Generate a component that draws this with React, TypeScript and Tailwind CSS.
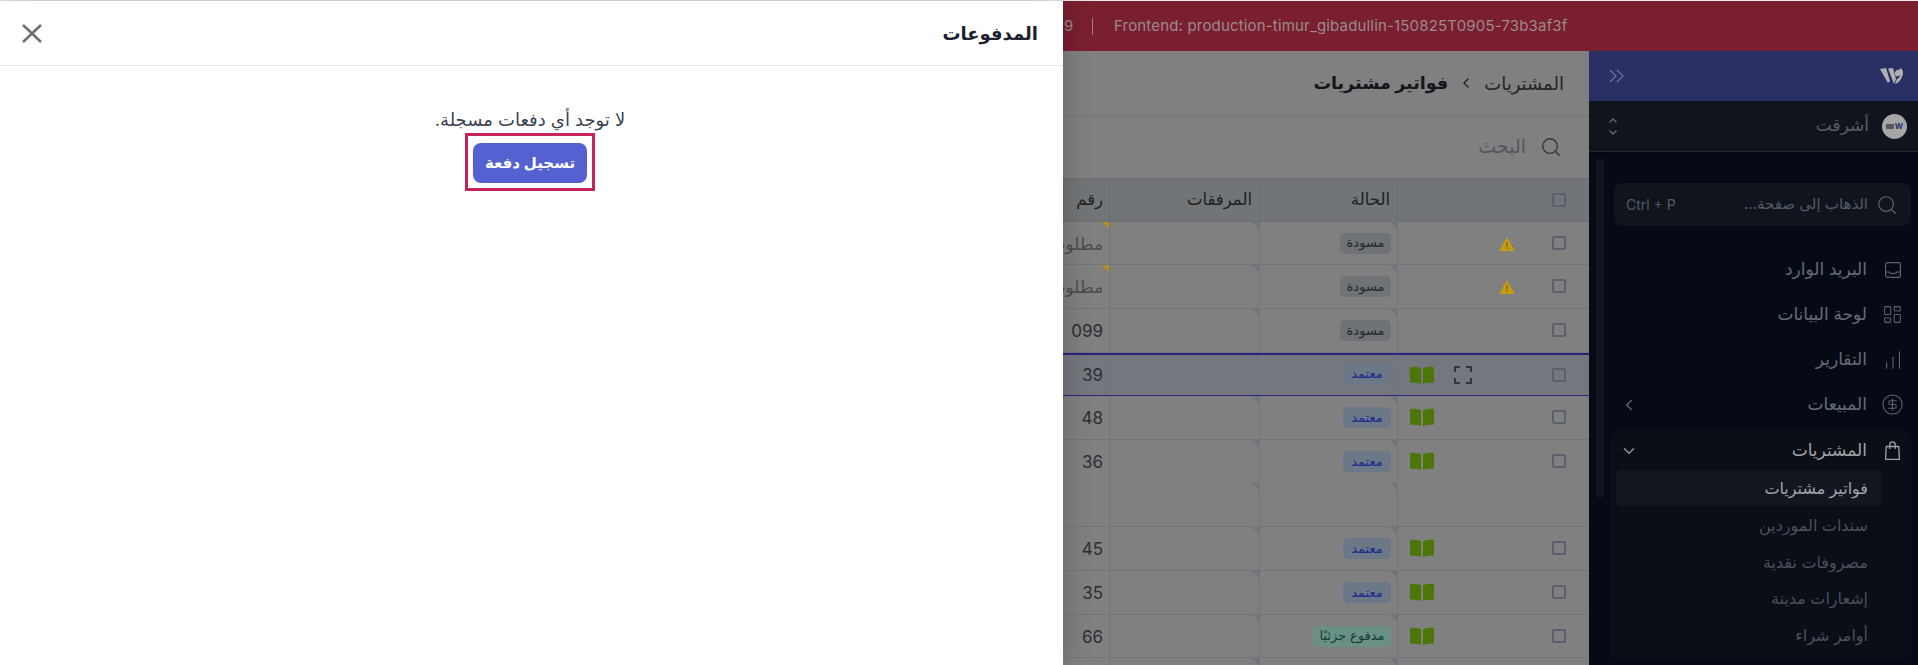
import { ChevronDown, ChevronLeft, ChartNoAxesColumnIncreasing, CircleDollarSign, LayoutDashboard, Search } from "lucide-react";
import React from "react";

const font = "font-['Inter','Noto_Sans','DejaVu_Sans',sans-serif]";

type Row = {
  num: string;
  status: "draft" | "approved" | "partial";
  warn?: boolean;
  book?: boolean;
  focus?: boolean;
  selected?: boolean;
  tall?: boolean;
  muted?: boolean;
};

const rows: Row[] = [
  { num: "مطلوب", status: "draft", warn: true, muted: true },
  { num: "مطلوب", status: "draft", warn: true, muted: true },
  { num: "099", status: "draft" },
  { num: "39", status: "approved", book: true, focus: true, selected: true },
  { num: "48", status: "approved", book: true },
  { num: "36", status: "approved", book: true, tall: true },
  { num: "45", status: "approved", book: true },
  { num: "35", status: "approved", book: true },
  { num: "66", status: "partial", book: true },
];

function Corner({ yellow, mid }: { yellow?: boolean; mid?: boolean }) {
  return (
    <span
      className={`absolute right-0 w-[7px] h-[7px] [clip-path:polygon(0_0,100%_0,100%_100%)] ${
        mid ? "top-1/2" : "top-0"
      } ${yellow ? "bg-[#b8901c]" : "bg-[#6a7580]"}`}
    />
  );
}

function StatusTag({ status }: { status: Row["status"] }) {
  if (status === "draft")
    return (
      <span className="flex items-center justify-center h-[21px] w-[51px] rounded-[5px] bg-[#6f7276] text-[#26292d] text-[13px]">
        مسودة
      </span>
    );
  if (status === "approved")
    return (
      <span className="flex items-center justify-center h-[21px] w-[48px] rounded-[5px] bg-[#6c7888] text-[#1c2a8c] text-[13px]">
        معتمد
      </span>
    );
  return (
    <span className="flex items-center justify-center h-[21px] w-[78px] rounded-[5px] bg-[#6b9186] text-[#123f36] text-[13px]">
      مدفوع جزئيًا
    </span>
  );
}

function Checkbox() {
  return <span className="block w-[14px] h-[14px] shrink-0 rounded-[2px] border-2 border-[#5a616c]" />;
}

function BookIcon() {
  return (
    <svg width="24" height="18" viewBox="0 0 24 18">
      <path d="M11 2.5C9 1 5 .5 1.500.8.6.9 0 1.600 0 2.500v13c0 .8.7 1.400 1.500 1.300 3.500-.3 7 .1 9.500 1.200z" fill="#4c7708" />
      <path d="M13 2.500c2-1.500 6-2 9.500-1.700.9.1 1.500.8 1.500 1.700v13c0 .8-.7 1.400-1.500 1.300-3.500-.3-7 .1-9.500 1.200z" fill="#4c7708" />
    </svg>
  );
}

function WarnIcon() {
  return (
    <svg width="16" height="14" viewBox="0 0 16 14">
      <path d="M8 0 16 14H0z" fill="#c39a12" />
      <rect x="7.300" y="5" width="1.400" height="4.500" fill="#85690f" />
      <rect x="7.300" y="10.500" width="1.400" height="1.500" fill="#85690f" />
    </svg>
  );
}

function FocusIcon() {
  return (
    <svg width="18" height="18" viewBox="0 0 18 18" fill="none" stroke="#32363c" strokeWidth="2">
      <path d="M1 6V1h5M12 1h5v5M17 12v5h-5M6 17H1v-5" />
    </svg>
  );
}

function InboxIcon() {
  return (
    <svg width="16" height="16" viewBox="0 0 16 16" fill="none" stroke="#5b6270" strokeWidth="1.200">
      <rect x=".6" y=".6" width="14.800" height="14.800" rx="2" />
      <path d="M.6 10h3.400c1 2.200 7 2.200 8 0h3.400" />
    </svg>
  );
}

function BagIcon() {
  return (
    <svg width="15" height="19" viewBox="0 0 15 19" fill="none" stroke="#a0a4aa" strokeWidth="1.300">
      <path d="M1.200 5.500h12.600l.6 12.800H.6z" strokeLinejoin="round" />
      <path d="M4.800 8V3.500a2.700 2.700 0 0 1 5.400 0V8" />
    </svg>
  );
}

function Logo() {
  return (
    <svg width="24" height="18" viewBox="0 0 24 18" fill="#b0b0b0">
      <path d="M0 2 6 1l4 13-2 2z" />
      <path d="M8 1.500l5-.5 3 11-2 5z" />
      <path d="M16 9c-2-2-1-5 1-6 3-1 3 1 3-2 3 1 4 5 2 9-1 3-4 6-7 7l2-5c1 0 3-2 3-4-1 1-3 2-4 1z" />
    </svg>
  );
}

function NavItem({ icon, label, chevron }: { icon: React.ReactNode; label: string; chevron?: boolean }) {
  return (
    <div className="flex items-center h-[45px] text-[#666d7a] text-[17px]">
      <span className="w-[51px] flex justify-center shrink-0">{icon}</span>
      <span>{label}</span>
      {chevron && <ChevronLeft size={18} className="mr-auto ml-[31px] text-[#5b6270]" />}
    </div>
  );
}

function Table() {
  return (
    <div>
      <div className="flex h-[43.67px] bg-[#727578] border-y border-[#6e7073] text-[16.5px] text-[#1d1f22]">
        <div className="w-[192px] shrink-0 flex items-center border-l border-[#696b6e] pr-[23px]">
          <Checkbox />
        </div>
        <div className="w-[138px] shrink-0 flex items-center border-l border-[#696b6e] pr-[7px]">الحالة</div>
        <div className="w-[150px] shrink-0 flex items-center border-l border-[#696b6e] pr-[7px]">المرفقات</div>
        <div className="flex-1 flex items-center pr-[6px]">رقم</div>
      </div>
      {rows.map((row, i) => (
        <div
          key={i}
          className={`flex border-b ${row.tall ? "h-[87.33px]" : "h-[43.67px]"} ${
            row.selected ? "bg-[#75777f] border-y-2 border-[#2a2483]" : "border-[#727478]"
          }`}
        >
          <div
            className={`w-[192px] shrink-0 flex items-start border-l border-[#737578] pr-[23px] ${
              row.selected ? "pt-[13px]" : "pt-[14px]"
            }`}
          >
            <Checkbox />
            <span className="w-[16px] mr-[37px] mt-px flex justify-center">{row.warn && <WarnIcon />}</span>
            <span className="w-[18px] mr-[27px] -mt-[2px] flex justify-center">{row.focus && <FocusIcon />}</span>
            <span className="w-[24px] mr-[20px] -mt-[2px] flex justify-center">{row.book && <BookIcon />}</span>
          </div>
          <div
            className={`relative w-[138px] shrink-0 flex items-start border-l border-[#737578] pr-[6px] ${
              row.selected ? "pt-[9px]" : "pt-[11px]"
            }`}
          >
            <Corner />
            {row.tall && <Corner mid />}
            <StatusTag status={row.status} />
          </div>
          <div className="relative w-[150px] shrink-0 border-l border-[#737578]">
            <Corner />
            {row.tall && <Corner mid />}
          </div>
          <div
            className={`relative flex-1 pr-[6px] text-[17px] leading-[24px] ${row.selected ? "pt-[8px]" : "pt-[10px]"} ${
              row.muted ? "text-[#4a4c50]" : "text-[#2c2e31]"
            }`}
          >
            {row.muted && <Corner yellow />}
            {row.num}
          </div>
        </div>
      ))}
      <div className="flex h-[10px]">
        <div className="w-[192px] shrink-0 border-l border-[#737578]" />
        <div className="relative w-[138px] shrink-0 border-l border-[#737578]">
          <Corner />
        </div>
        <div className="relative w-[150px] shrink-0 border-l border-[#737578]">
          <Corner />
        </div>
      </div>
    </div>
  );
}

export default function App() {
  return (
    <div dir="rtl" className={`${font} relative w-[1918px] h-[665px] overflow-hidden bg-[#808080]`}>
      <div className="h-px bg-[#e5e7eb]" />
      <div dir="ltr" className="h-[50px] bg-[#7a1f30] flex items-center text-[15px] tracking-[0.17px] text-[#9c8a8e] pl-[1064px]">
        <span className="w-[28px]">9</span>
        <span className="w-px h-[17px] bg-[#a08088]" />
        <span className="ml-[21px]">Frontend: production-timur_gibadullin-150825T0905-73b3af3f</span>
      </div>

      <div className="flex h-[614px]">
        {/* sidebar */}
        <aside className="relative w-[329px] shrink-0 bg-[#060a14]">
          <div className="h-[50px] bg-[#2a2f66] flex items-center justify-between pr-[14px] pl-[20px]">
            <Logo />
            <svg width="15" height="14" viewBox="0 0 15 14" fill="none" stroke="#6a70a0" strokeWidth="1.300">
              <path d="M1 1l6 6-6 6M8 1l6 6-6 6" />
            </svg>
          </div>
          <div className="h-[51px] bg-[#10151d] border-b border-[#23282f] flex items-center pr-[11px] pl-[19px]">
            <span className="w-[25px] h-[25px] rounded-full bg-[#a6a6a6] flex items-center justify-center gap-px text-[8px] font-bold text-[#2a2f66]">
              <span>W</span>
              <span className="w-[8px] h-[5px] bg-[#55585c]" />
            </span>
            <span className="mr-[13px] text-[17px] text-[#575c66]">أشرقت</span>
            <svg width="10" height="17" viewBox="0 0 10 17" fill="none" stroke="#666b74" strokeWidth="1.300" className="mr-auto">
              <path d="M1.500 4.500 5 1l3.500 3.500M1.500 12.500 5 16l3.500-3.500" />
            </svg>
          </div>
          <span className="absolute left-[7px] top-[108px] w-2 h-[339px] rounded-full bg-[#10151d]" />

          <div className="mt-[31px] mr-[7px] ml-[25px] h-[43px] rounded-[8px] bg-[#10151d] flex items-center pr-[13px] pl-[12px] text-[15px] text-[#535a66]">
            <Search size={22} strokeWidth={1.300} className="shrink-0 text-[#5b6270]" />
            <span className="mr-[8px]">الذهاب إلى صفحة...</span>
            <span dir="ltr" className="mr-auto text-[14px]">Ctrl + P</span>
          </div>

          <nav className="mt-[21px]">
            <NavItem icon={<InboxIcon />} label="البريد الوارد" />
            <NavItem icon={<LayoutDashboard size={21} strokeWidth={1.200} className="text-[#5b6270]" />} label="لوحة البيانات" />
            <NavItem icon={<ChartNoAxesColumnIncreasing size={22} strokeWidth={1.200} className="text-[#5b6270]" />} label="التقارير" />
            <NavItem icon={<CircleDollarSign size={23} strokeWidth={1.100} className="text-[#5b6270]" />} label="المبيعات" chevron />

            <div className="mt-[4px] mr-[7px] ml-[22px] h-[229px] rounded-[8px] bg-[#0a0e17]">
              <div className="flex items-center h-[39px] text-[17px] font-medium text-[#a0a4aa]">
                <span className="w-[44px] pl-[6px] flex justify-center shrink-0">
                  <BagIcon />
                </span>
                <span>المشتريات</span>
                <ChevronDown size={18} className="mr-auto ml-[9px] text-[#8e9298]" />
              </div>
              <div className="mr-[30px] ml-[5px] text-[16px] text-[#4a505b]">
                <div className="h-[36px] rounded-[6px] bg-[#12171f] flex items-center pr-[13px] font-medium text-[#a0a4aa]">فواتير مشتريات</div>
                <div className="h-[37px] flex items-center pr-[13px]">سندات الموردين</div>
                <div className="h-[37px] flex items-center pr-[13px]">مصروفات نقدية</div>
                <div className="h-[36px] flex items-center pr-[13px]">إشعارات مدينة</div>
                <div className="h-[37px] flex items-center pr-[13px]">أوامر شراء</div>
              </div>
            </div>
          </nav>
        </aside>

        {/* main */}
        <main className="flex-1">
          <div className="h-[65px] border-b border-[#737578] flex items-center pr-[25px] text-[#222427]">
            <span className="text-[18px]">المشتريات</span>
            <ChevronLeft size={16} strokeWidth={2.200} className="mr-[10px] ml-[10px]" />
            <span className="text-[17.5px] font-semibold text-[#14161a]">فواتير مشتريات</span>
          </div>
          <div className="h-[62px] flex items-center pr-[27px] gap-[14px] text-[19px] text-[#55575b]">
            <Search size={22} strokeWidth={1.500} className="text-[#33363a]" />
            <span>البحث</span>
          </div>
          <Table />
        </main>
      </div>

      {/* payments drawer */}
      <div className="absolute left-0 top-px bottom-0 w-[1063px] bg-white shadow-[0_0_28px_rgba(0,0,0,0.22)]">
        <div className="h-[65px] border-b border-[#e5e7eb] flex items-center justify-between pr-[25px] pl-[22px]">
          <h2 className="text-[18px] font-semibold text-[#1c2230]">المدفوعات</h2>
          <svg width="20" height="19" viewBox="0 0 20 19" stroke="#6b7076" strokeWidth="2.500">
            <path d="M1 1l18 17M19 1 1 18" />
          </svg>
        </div>
        <div className="flex flex-col items-center pt-[41px] pr-[3px]">
          <p className="text-[18px] leading-[26px] text-[#3a4352]">لا توجد أي دفعات مسجلة.</p>
          <div className="border-[3px] border-[#c5235c] px-[5px] pt-[7px] pb-[5px]">
            <button className="w-[114px] h-[40px] rounded-[8px] bg-[#5561d0] text-white text-[15px] font-semibold">
              تسجيل دفعة
            </button>
          </div>
        </div>
      </div>
    </div>
  );
}
